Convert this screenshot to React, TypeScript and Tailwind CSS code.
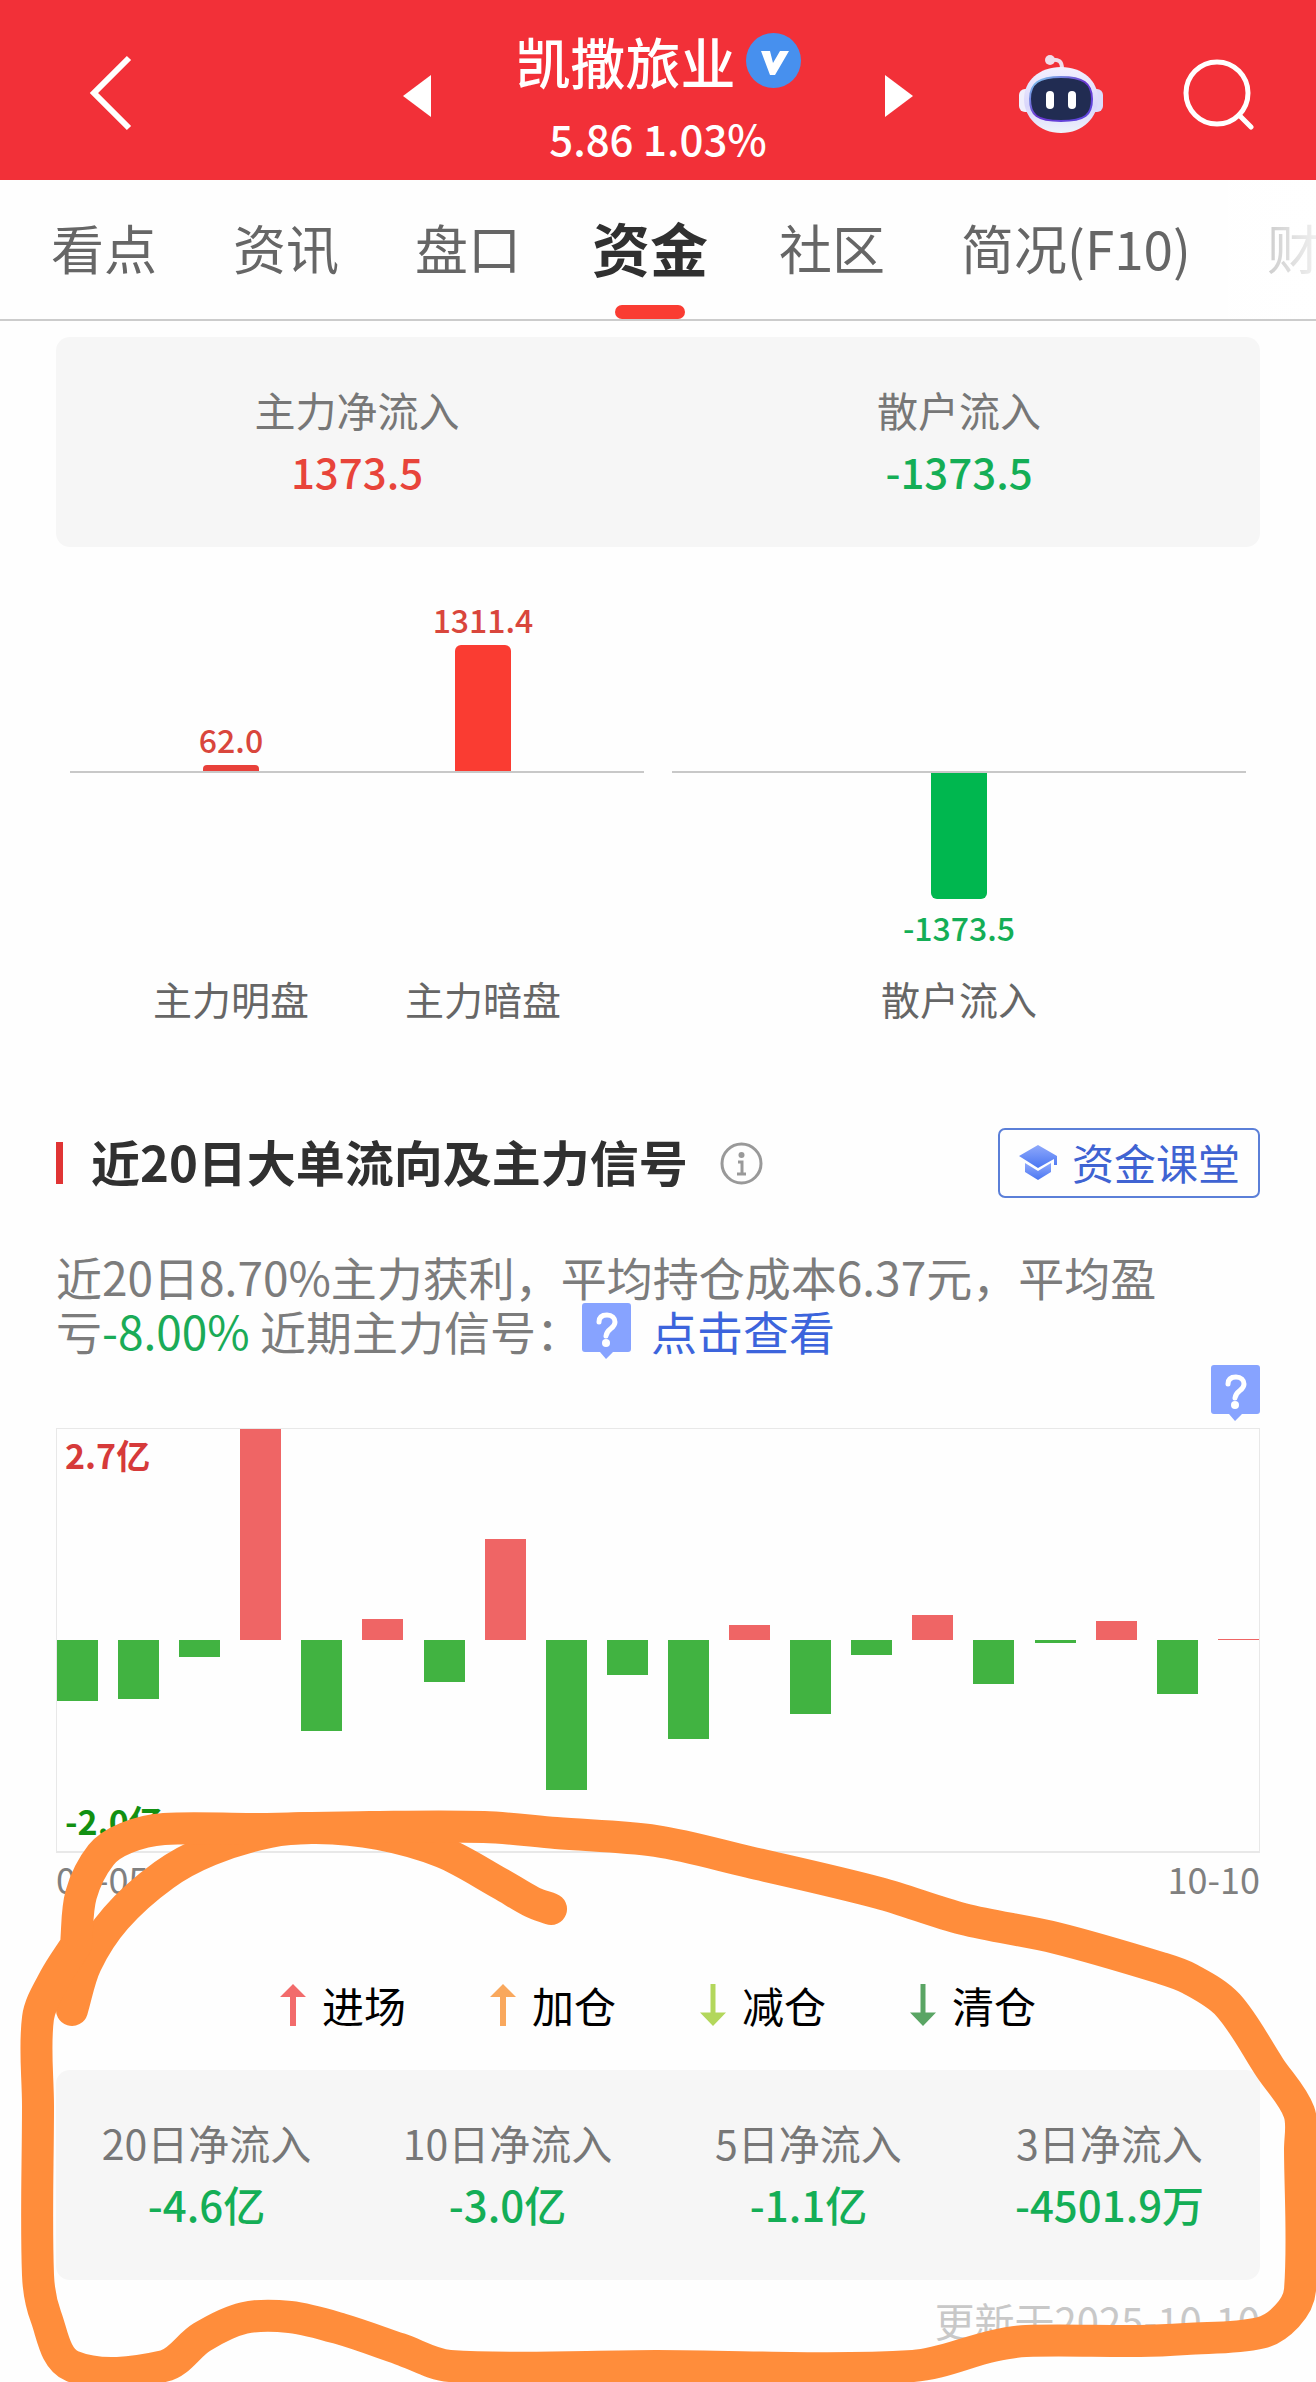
import { useState } from 'react';

// ---------------------------------------------------------------------------
// Data
// ---------------------------------------------------------------------------

const tabs = ['看点', '资讯', '盘口', '资金', '社区', '简况(F10)', '财'];

const todayFlow = [
  { label: '主力净流入', value: '1373.5' },
  { label: '散户流入', value: '-1373.5' },
];

const periodFlow = [
  { label: '20日净流入', value: '-4.6亿' },
  { label: '10日净流入', value: '-3.0亿' },
  { label: '5日净流入', value: '-1.1亿' },
  { label: '3日净流入', value: '-4501.9万' },
];

// Daily large-order flow, as a percentage of half the chart height
const dailyFlow = [
  -29, -28, -8, 100, -43, 10, -20, 48, -71, -16.5,
  -47, 7, -35, -7, 12, -21, -1.2, 9, -25.5, 0.4,
];

const signals = [
  { label: '进场', color: '#f26b6b', up: true },
  { label: '加仓', color: '#f9a85d', up: true },
  { label: '减仓', color: '#b3d75c', up: false },
  { label: '清仓', color: '#5aa564', up: false },
];

// Pen strokes of the markup layer, in the order they were drawn
const penStrokes: [number, number][][] = [
  [
    [551, 1909], [532, 1902], [501, 1884], [442, 1852], [379, 1834], [316, 1828],
    [269, 1832], [210, 1850], [164, 1875], [116, 1918], [86, 1964], [72, 2010],
  ],
  [
    [76, 1945], [81, 1895], [101, 1855], [126, 1838], [164, 1829], [257, 1829],
    [370, 1827], [484, 1827], [556, 1833], [656, 1841], [749, 1862], [879, 1893],
    [963, 1919], [1056, 1938], [1161, 1968], [1190, 1979], [1228, 2005], [1270, 2068],
    [1299, 2112], [1300, 2150], [1300, 2290], [1287, 2316], [1260, 2333], [1186, 2339],
    [1140, 2341], [1026, 2341], [993, 2346], [913, 2366], [656, 2366], [450, 2366],
    [400, 2349], [341, 2329], [290, 2317], [244, 2318], [202, 2337], [164, 2366],
    [72, 2366], [46, 2317], [38, 2275], [38, 2106], [38, 2018], [55, 1978], [76, 1945],
  ],
];

// Catmull-Rom spline through the sampled points
function smoothPath(points: [number, number][]) {
  let d = `M${points[0][0]} ${points[0][1]}`;
  for (let i = 0; i < points.length - 1; i++) {
    const p0 = points[i - 1] ?? points[i];
    const p1 = points[i];
    const p2 = points[i + 1];
    const p3 = points[i + 2] ?? p2;
    const dist = Math.hypot(p2[0] - p1[0], p2[1] - p1[1]);
    const t1 = Math.min(1, dist / (Math.hypot(p2[0] - p0[0], p2[1] - p0[1]) || 1)) / 3;
    const t2 = Math.min(1, dist / (Math.hypot(p3[0] - p1[0], p3[1] - p1[1]) || 1)) / 3;
    d += ` C${p1[0] + (p2[0] - p0[0]) * t1} ${p1[1] + (p2[1] - p0[1]) * t1}`;
    d += ` ${p2[0] - (p3[0] - p1[0]) * t2} ${p2[1] - (p3[1] - p1[1]) * t2}`;
    d += ` ${p2[0]} ${p2[1]}`;
  }
  return d;
}

// ---------------------------------------------------------------------------
// Icons
// ---------------------------------------------------------------------------

function RobotIcon() {
  return (
    <svg width="84" height="78" viewBox="0 0 84 78" aria-hidden="true">
      <defs>
        <linearGradient id="shell" x1="0" y1="0" x2="0" y2="1">
          <stop offset="0" stopColor="#f3f0ff" />
          <stop offset="0.6" stopColor="#d9d6fb" />
          <stop offset="1" stopColor="#eef3fb" />
        </linearGradient>
        <linearGradient id="rim" x1="0" y1="0" x2="1" y2="1">
          <stop offset="0" stopColor="#7fd6ef" />
          <stop offset="0.5" stopColor="#6a35d0" />
          <stop offset="1" stopColor="#5b4be0" />
        </linearGradient>
      </defs>
      <path d="M31 5c9-1 12 1 12 9" fill="none" stroke="#f0dcea" strokeWidth="4" />
      <circle cx="31" cy="5" r="5" fill="#f0dcea" />
      <rect x="0" y="34" width="14" height="23" rx="6" fill="#f0effc" />
      <rect x="70" y="34" width="14" height="23" rx="6" fill="#dcdcfb" />
      <path d="M42 12c22 0 37 14 37 32S64 78 42 78 5 62 5 44s15-32 37-32z" fill="url(#shell)" />
      <path
        d="M42 22c22 0 31 6 31 22s-7 22-31 22-31-6-31-22 9-22 31-22z"
        fill="#212c52"
        stroke="url(#rim)"
        strokeWidth="2"
      />
      <rect x="27" y="36" width="8" height="18" rx="4" fill="#fff" />
      <rect x="49" y="36" width="8" height="18" rx="4" fill="#fff" />
    </svg>
  );
}

function HelpBubble() {
  return (
    <svg width="49" height="56" viewBox="0 0 49 56" aria-hidden="true">
      <path d="M3 0h43a3 3 0 0 1 3 3v43a3 3 0 0 1-3 3H31l-7 7-6-7H3a3 3 0 0 1-3-3V3a3 3 0 0 1 3-3z" fill="#87a3ff" />
      <path d="M17 19c0-5 3-7 8-7s8 3 8 7c0 7-8 6-9 14" fill="none" stroke="#fff" strokeWidth="5" strokeLinecap="round" />
      <circle cx="24" cy="40" r="4" fill="#fff" />
    </svg>
  );
}

function SignalArrow({ color, up }: { color: string; up: boolean }) {
  return (
    <svg width="26" height="42" viewBox="0 0 26 42" aria-hidden="true">
      <path
        d={up ? 'M13 0L26 13H16V42H10V13H0z' : 'M13 42L0 28.500H10.500V0H15.500V28.500H26z'}
        fill={color}
      />
    </svg>
  );
}

// ---------------------------------------------------------------------------
// Sections
// ---------------------------------------------------------------------------

function Header() {
  return (
    <header className="grid h-[180px] grid-cols-[1fr_auto_1fr] items-center bg-[#f23038] text-white">
      <button type="button" aria-label="返回" className="ml-[88px] justify-self-start pt-1.5">
        <svg width="46" height="76" viewBox="0 0 46 76" fill="none" stroke="currentColor" strokeWidth="6">
          <path d="M41 3L6 38l35 35" />
        </svg>
      </button>

      <div className="flex items-center gap-[84px] pt-3">
        <button type="button" aria-label="上一只">
          <svg width="28" height="42" viewBox="0 0 28 42" fill="currentColor">
            <path d="M28 0v42L0 21z" />
          </svg>
        </button>
        <div className="text-center">
          <h1 className="flex items-center gap-2.5 text-[55px] leading-[72px] font-medium">
            凯撒旅业
            <svg width="55" height="55" viewBox="0 0 55 55" aria-label="已认证">
              <circle cx="27.500" cy="27.500" r="27.500" fill="#4790ee" />
              <path d="M15 18h9l3 12 7-12h9L29 42h-5z" fill="#fff" />
            </svg>
          </h1>
          <p className="mt-3 text-[42px] leading-[60px] font-medium">5.86 1.03%</p>
        </div>
        <button type="button" aria-label="下一只">
          <svg width="28" height="42" viewBox="0 0 28 42" fill="currentColor">
            <path d="M0 0v42l28-21z" />
          </svg>
        </button>
      </div>

      <div className="mr-[62px] flex items-center justify-end gap-20 pt-2">
        <button type="button" aria-label="智能助手">
          <RobotIcon />
        </button>
        <button type="button" aria-label="搜索">
          <svg width="71" height="71" viewBox="0 0 71 71" fill="none" stroke="currentColor" strokeWidth="5">
            <circle cx="34" cy="34" r="31" />
            <path d="M56 56l12 12" strokeLinecap="round" />
          </svg>
        </button>
      </div>
    </header>
  );
}

function TabBar() {
  const [active, setActive] = useState('资金');

  return (
    <nav className="relative flex h-[141px] overflow-hidden border-b-2 border-[#cccccc] pl-[13px]">
      {tabs.map((tab) => (
        <button
          key={tab}
          type="button"
          onClick={() => setActive(tab)}
          className={
            tab === active
              ? 'flex w-[182px] shrink-0 flex-col items-center justify-between pt-7 text-[58px] leading-[78px] font-bold whitespace-nowrap text-[#303030]'
              : 'flex shrink-0 flex-col items-center px-[38px] pt-7 text-[53px] leading-[78px] whitespace-nowrap text-[#666666]'
          }
        >
          {tab}
          {tab === active && <span className="h-[14px] w-[70px] rounded-full bg-[#fa3c32]" />}
        </button>
      ))}
      {/* Fade on the scrolling edge */}
      <div className="pointer-events-none absolute inset-y-0 right-0 w-[110px] bg-linear-to-r from-white/40 to-white/90" />
    </nav>
  );
}

function FlowCard({ items }: { items: { label: string; value: string }[] }) {
  return (
    <dl className="flex rounded-[14px] bg-[#f6f6f6] pt-[41px] pb-[45px]">
      {items.map((item) => (
        <div key={item.label} className="flex-1 text-center">
          <dt className="text-[41px] leading-[62px] text-[#777777]">{item.label}</dt>
          <dd
            className={
              item.value.startsWith('-')
                ? 'text-[42px] leading-[62px] font-medium text-[#14ae56]'
                : 'text-[42px] leading-[62px] font-medium text-[#e8443a]'
            }
          >
            {item.value}
          </dd>
        </div>
      ))}
    </dl>
  );
}

function TodayChart() {
  return (
    <div className="grid grid-cols-2 gap-7 px-[14px] text-center text-[32px] leading-[44px] font-medium">
      <div>
        <div className="flex h-[226px] items-end border-b-2 border-[#c8c8c8] px-[35px] text-[#d9463c]">
          <div className="flex flex-1 flex-col items-center gap-1">
            62.0
            <span className="h-[6px] w-14 rounded-t-[4px] bg-[#e8403a]" />
          </div>
          <div className="flex flex-1 flex-col items-center gap-1">
            1311.4
            <span className="h-[126px] w-14 rounded-t-[6px] bg-[#fa3c32]" />
          </div>
        </div>
        <div className="flex px-[35px] pt-[195px] text-[39px] leading-[60px] font-normal text-[#666666]">
          <span className="flex-1">主力明盘</span>
          <span className="flex-1">主力暗盘</span>
        </div>
      </div>
      <div>
        <div className="h-[226px] border-b-2 border-[#c8c8c8]" />
        <div className="flex h-[195px] flex-col items-center gap-1.5 text-[#14ae56]">
          <span className="h-[126px] w-14 rounded-b-[6px] bg-[#00b74f]" />
          -1373.5
        </div>
        <p className="text-[39px] leading-[60px] font-normal text-[#666666]">散户流入</p>
      </div>
    </div>
  );
}

function DailyChart() {
  return (
    <figure>
      <div className="relative h-[425px] border border-b-2 border-[#e8e8e8]">
        <div className="flex h-full justify-between">
          {dailyFlow.map((value, i) => (
            <div key={i} className="flex w-[41px] flex-col">
              <div className="flex h-1/2 flex-col justify-end">
                {value > 0 && <div className="min-h-px bg-[#ef6565]" style={{ height: `${value}%` }} />}
              </div>
              <div className="h-1/2">
                {value < 0 && <div className="bg-[#41b341]" style={{ height: `${-value}%` }} />}
              </div>
            </div>
          ))}
        </div>
        <span className="absolute top-0.5 left-2 text-[34px] leading-[48px] font-bold text-[#d63a3a]">2.7亿</span>
        <span className="absolute bottom-1.5 left-2 text-[34px] leading-[48px] font-bold text-[#129012]">-2.0亿</span>
      </div>
      <figcaption className="flex justify-between text-[36px] leading-[50px] text-[#808080]">
        <span>09-05</span>
        <span>10-10</span>
      </figcaption>
    </figure>
  );
}

// ---------------------------------------------------------------------------
// Page
// ---------------------------------------------------------------------------

export default function App() {
  return (
    <div className="relative overflow-hidden bg-[#fefefe] font-['Noto_Sans_CJK_SC',sans-serif]">
      <Header />
      <TabBar />

      <main className="px-14 pt-4 pb-8">
        <FlowCard items={todayFlow} />
        <TodayChart />

        {/* 20-day section heading */}
        <div className="mt-[100px] flex items-center">
          <span className="h-[42px] w-[7px] bg-[#e03434]" />
          <h2 className="ml-7 pb-1 text-[49px] leading-[66px] font-bold text-[#303030]">近20日大单流向及主力信号</h2>
          <button type="button" aria-label="说明" className="ml-8">
            <svg width="43" height="43" viewBox="0 0 43 43" fill="none" stroke="#999999" strokeWidth="3">
              <circle cx="21.500" cy="21.500" r="19.500" />
              <circle cx="21.500" cy="13" r="3" fill="#999999" stroke="none" />
              <path d="M18 20h4v12M17 32h9" />
            </svg>
          </button>
          <button
            type="button"
            className="ml-auto flex h-[70px] items-center gap-3 rounded-[7px] border-2 border-[#5b7fd8] px-[18px] pb-1 text-[42px] text-[#3f63d2]"
          >
            <svg width="42" height="38" viewBox="0 0 42 38" aria-hidden="true">
              <defs>
                <linearGradient id="cap" x1="0" y1="0" x2="0" y2="1">
                  <stop offset="0" stopColor="#8fa9fb" />
                  <stop offset="1" stopColor="#4a76f2" />
                </linearGradient>
              </defs>
              <path d="M20 3l19 11v9h-3v-6L20 26 1 14z" fill="url(#cap)" />
              <path d="M7 21l13 8 13-8v9l-13 8-13-8z" fill="url(#cap)" />
            </svg>
            资金课堂
          </button>
        </div>

        <p className="mt-[51px] text-[46px] leading-[54px] text-[#7c7c7c]">
          近20日8.70%主力获利，平均持仓成本6.37元，平均盈
          <br />
          亏<span className="text-[#1aab57]">-8.00%</span> 近期主力信号：
          <button type="button" aria-label="信号说明" className="mr-5 inline-block h-[54px] align-top">
            <HelpBubble />
          </button>
          <a href="#signal" className="text-[#3c64dc]">点击查看</a>
        </p>

        <div className="mt-2 mb-[7px] flex justify-end">
          <button type="button" aria-label="图表说明">
            <HelpBubble />
          </button>
        </div>

        <DailyChart />

        <ul className="mt-[70px] mb-[33px] flex justify-center gap-[84px] text-[42px] leading-[64px] text-black">
          {signals.map((signal) => (
            <li key={signal.label} className="flex items-center gap-4">
              <SignalArrow color={signal.color} up={signal.up} />
              {signal.label}
            </li>
          ))}
        </ul>

        <FlowCard items={periodFlow} />

        <p className="mt-2.5 text-right text-[40px] leading-[60px] text-[#c8c8c8]">更新于2025-10-10</p>
      </main>

      {/* Markup layer */}
      <svg
        className="pointer-events-none absolute inset-0 h-full w-full"
        viewBox="0 0 1316 2382"
        preserveAspectRatio="none"
        fill="none"
        stroke="#ff8d3b"
        strokeWidth="32"
        strokeLinecap="round"
        strokeLinejoin="round"
        aria-hidden="true"
      >
        {penStrokes.map((points, i) => (
          <path key={i} d={smoothPath(points)} />
        ))}
      </svg>
    </div>
  );
}
